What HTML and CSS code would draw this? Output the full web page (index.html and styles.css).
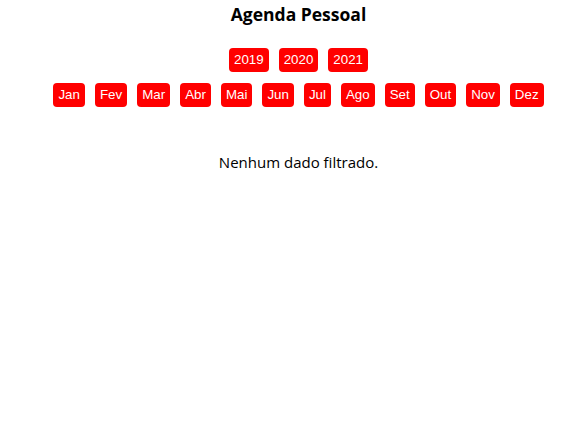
FILE: index.html
```html
<!DOCTYPE html>
<html lang="pt">
<head>
<meta charset="utf-8">
<title>Agenda Pessoal</title>
<link rel="stylesheet" href="styles.css">
</head>
<body>
<div class="app">
  <h1 class="title">Agenda Pessoal</h1>
  <div class="row years">
    <button class="btn">2019</button>
    <button class="btn">2020</button>
    <button class="btn">2021</button>
  </div>
  <div class="row months">
    <button class="btn">Jan</button>
    <button class="btn">Fev</button>
    <button class="btn">Mar</button>
    <button class="btn">Abr</button>
    <button class="btn">Mai</button>
    <button class="btn">Jun</button>
    <button class="btn">Jul</button>
    <button class="btn">Ago</button>
    <button class="btn">Set</button>
    <button class="btn">Out</button>
    <button class="btn">Nov</button>
    <button class="btn">Dez</button>
  </div>
  <p class="message">Nenhum dado filtrado.</p>
</div>
</body>
</html>
```
FILE: styles.css
```css
html, body {
  margin: 0;
  padding: 0;
  background: #ffffff;
}
.app {
  display: flex;
  flex-direction: column;
  align-items: center;
  padding: 3px 0 0 20px;
  font-family: "Open Sans", "Liberation Sans", sans-serif;
  color: #000000;
}
.title {
  margin: 0;
  font-size: 17.5px;
  line-height: 22px;
  font-weight: 700;
}
.row {
  display: flex;
  gap: 10px;
}
.years {
  margin-top: 23px;
}
.months {
  margin-top: 11px;
}
.btn {
  height: 24px;
  padding: 0 5px;
  border: none;
  border-radius: 4px;
  background: #ff0000;
  color: #ffffff;
  font-family: "Liberation Sans", Arial, sans-serif;
  font-size: 13.33px;
  line-height: 24px;
}
.message {
  margin: 45px 0 0 0;
  font-size: 15px;
  line-height: 20px;
}
```
